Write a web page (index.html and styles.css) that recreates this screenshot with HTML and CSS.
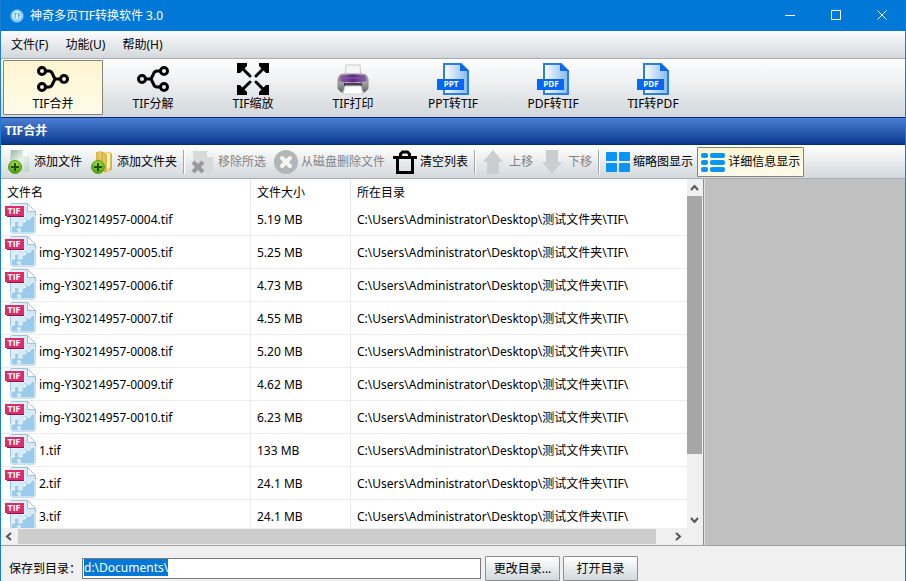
FILE: index.html
```html
<!DOCTYPE html>
<html lang="zh-CN">
<head>
  <meta charset="UTF-8">
  <meta name="viewport" content="width=device-width, initial-scale=1.0">
  <title>神奇多页TIF转换软件 3.0</title>
  <link rel="stylesheet" href="styles.css">
</head>
<body>

  <!-- Shared icons -->
  <svg class="defs" width="0" height="0">
    <defs>
      <linearGradient id="pageBlue" x1="0" y1="0" x2="1" y2="1">
        <stop offset="0" stop-color="#e6f2fa"/>
        <stop offset="1" stop-color="#c3e0f2"/>
      </linearGradient>
      <linearGradient id="docFill" x1="0" y1="0" x2="1" y2="0">
        <stop offset="0" stop-color="#ffffff"/>
        <stop offset="1" stop-color="#86b8f0"/>
      </linearGradient>
      <linearGradient id="pageGreen" x1="0" y1="0" x2="1" y2="1">
        <stop offset="0" stop-color="#8fb39b"/>
        <stop offset="0.5" stop-color="#eaf2ec"/>
        <stop offset="1" stop-color="#bcd0c2"/>
      </linearGradient>
      <radialGradient id="green" cx="0.5" cy="0.3" r="0.7">
        <stop offset="0" stop-color="#b5e24a"/>
        <stop offset="1" stop-color="#3f9a0c"/>
      </radialGradient>
      <linearGradient id="gold" x1="0" y1="0" x2="1" y2="0">
        <stop offset="0" stop-color="#d9b545"/>
        <stop offset="0.6" stop-color="#f7e08c"/>
        <stop offset="1" stop-color="#d6ac3a"/>
      </linearGradient>
      <linearGradient id="metal" x1="0" y1="0" x2="0" y2="1">
        <stop offset="0" stop-color="#dcdcdc"/>
        <stop offset="1" stop-color="#66666a"/>
      </linearGradient>
      <linearGradient id="purple" x1="0" y1="0" x2="1" y2="0">
        <stop offset="0" stop-color="#8d6aa5"/>
        <stop offset="0.5" stop-color="#5d2882"/>
        <stop offset="1" stop-color="#8d6aa5"/>
      </linearGradient>
      <symbol id="tif" viewBox="0 0 32 32">
        <path d="M6.500 .5h16l8 8v20a2 2 0 0 1-2 2h-21a2 2 0 0 1-2-2v-26a2 2 0 0 1 1-2z" fill="url(#pageBlue)" stroke="#9fc3d8"/>
        <path d="M6 23h3.500c1-1-1.500-3 .5-4.500 3-1.500 5 1 3.500 3-.5 1 0 1.500 1 1.500h2.500v-3c0-2 3 0 4-2 .5-2-3-2-2.500-4h3c0 2 1.500 3 3.500 2 1-1 1-2 1-3h4v17H6z" fill="#9acbea" stroke="#f6fbfe"/>
        <path d="M14 30c0-2-3-2-2-4s5-1 4 1 0 3 2 3" fill="#d9edf8"/>
        <path d="M22.500 .5v8h8z" fill="#fff" stroke="#9fc3d8"/>
        <path d="M0 4h19v10H2z" fill="#8c1545"/>
        <path d="M0 3h19v10H0z" fill="#dc2d6b"/>
        <text x="9" y="11" text-anchor="middle" class="tag big">TIF</text>
      </symbol>
      <symbol id="doc" viewBox="0 0 32 32">
        <path d="M7 1h17l7 7v23H7z" fill="url(#docFill)" stroke="#2a7fe6" stroke-width="2"/>
        <path d="M23 0v8h9z" fill="#0a68f0"/>
        <path d="M0 16h27v11H0z" fill="#0567f5"/>
      </symbol>
    </defs>
  </svg>

  <!-- Title bar -->
  <header class="titlebar">
    <svg class="logo" width="14" height="14" viewBox="0 0 14 14">
      <circle cx="7" cy="7" r="6.500" fill="#9ad0fa" stroke="#3e9cec"/>
      <circle cx="7" cy="6" r="4" fill="#d8eefe"/>
      <path d="M4 4.500h3M5.500 5v4M8.500 4v5M8.500 4.500h2M8.500 6.500h2" stroke="#59aef2" fill="none"/>
    </svg>
    <h1>神奇多页TIF转换软件 3.0</h1>
    <div class="window-buttons">
      <button aria-label="最小化"><svg width="11" height="11"><path d="M0 5.500h10" stroke="#fff"/></svg></button>
      <button aria-label="最大化"><svg width="11" height="11"><path d="M.5 .5h9v9h-9z" fill="none" stroke="#fff"/></svg></button>
      <button aria-label="关闭"><svg width="11" height="11"><path d="M.5 .5l9 9M9.500 .5l-9 9" stroke="#fff"/></svg></button>
    </div>
  </header>

  <!-- Menu -->
  <nav class="menu">
    <a href="#">文件(F)</a>
    <a href="#">功能(U)</a>
    <a href="#">帮助(H)</a>
  </nav>

  <!-- Main toolbar -->
  <div class="toolbar">
    <button class="tool active">
      <svg width="32" height="32" viewBox="0 0 32 32" fill="none" stroke="#000" stroke-width="3">
        <circle cx="5" cy="8" r="3.500"/><circle cx="5" cy="24" r="3.500"/><circle cx="27" cy="16" r="3.500"/>
        <path d="M9 8h3c3 0 3 2 4 4l2 4-2 4c-1 2-1 4-4 4H9M17 16h6"/>
      </svg>
      TIF合并
    </button>
    <button class="tool">
      <svg width="32" height="32" viewBox="0 0 32 32" fill="none" stroke="#000" stroke-width="3">
        <circle cx="27" cy="8" r="3.500"/><circle cx="27" cy="24" r="3.500"/><circle cx="5" cy="16" r="3.500"/>
        <path d="M23 8h-3c-3 0-3 2-4 4l-2 4 2 4c1 2 1 4 4 4h3M15 16H9"/>
      </svg>
      TIF分解
    </button>
    <button class="tool">
      <svg width="32" height="32" viewBox="0 0 32 32">
        <path d="M4 4l9 9M28 4l-9 9M4 28l9-9M28 28l-9-9" stroke="#000" stroke-width="3" stroke-linecap="round"/>
        <path d="M0 0h10v3L3 10H0zM32 0H22v3l7 7h3zM0 32h10v-3l-7-7H0zM32 32H22v-3l7-7h3z"/>
      </svg>
      TIF缩放
    </button>
    <button class="tool">
      <svg width="32" height="32" viewBox="0 0 32 32">
        <path d="M9 2h14l1 14H8z" fill="#f5f5f5" stroke="#c9c9c9"/>
        <path d="M3 12l4-1h18l4 1 2 4v10l-3 3h-4V17H8v12H4l-3-3V16z" fill="url(#metal)" stroke="#8b8b8f"/>
        <path d="M3 13c4-2 22-2 26 0l1 5c-5 2-23 2-28 0z" fill="url(#purple)"/>
        <path d="M8 15h16" stroke="#8f5fb0"/>
        <path d="M7 20h18v4H7z" fill="#44424c"/>
        <path d="M8 23h16l2 8H6z" fill="#fff" stroke="#cfcfcf"/>
      </svg>
      TIF打印
    </button>
    <button class="tool">
      <svg width="32" height="32" viewBox="0 0 32 32"><use href="#doc"/><text x="14" y="24" text-anchor="middle" class="tag">PPT</text></svg>
      PPT转TIF
    </button>
    <button class="tool">
      <svg width="32" height="32" viewBox="0 0 32 32"><use href="#doc"/><text x="14" y="24" text-anchor="middle" class="tag">PDF</text></svg>
      PDF转TIF
    </button>
    <button class="tool">
      <svg width="32" height="32" viewBox="0 0 32 32"><use href="#doc"/><text x="14" y="24" text-anchor="middle" class="tag">PDF</text></svg>
      TIF转PDF
    </button>
  </div>

  <h2 class="banner">TIF合并</h2>

  <!-- File actions -->
  <div class="actions">
    <button class="action">
      <svg width="24" height="24" viewBox="0 0 24 24">
        <path d="M4 0h12l6 6v16H2z" fill="url(#pageGreen)"/>
        <path d="M16 0v6h6z" fill="#fff"/>
        <circle cx="8" cy="17" r="6.500" fill="url(#green)" stroke="#58a31d"/>
        <path d="M8 13v8M4 17h8" stroke="#214d08" stroke-width="2"/>
      </svg>
      添加文件
    </button>
    <button class="action">
      <svg width="24" height="24" viewBox="0 0 24 24">
        <path d="M6 2l6-1 1 1h7l2 2v16l-9 3-7-2z" fill="url(#gold)"/>
        <path d="M17 3h3v14l-3 3z" fill="#fff4c4"/>
        <path d="M12 2l4 3v17l-4-2z" fill="#e5c45a" stroke="#c99f35"/>
        <circle cx="8" cy="17" r="6.500" fill="url(#green)" stroke="#58a31d"/>
        <path d="M8 13v8M4 17h8" stroke="#214d08" stroke-width="2"/>
      </svg>
      添加文件夹
    </button>
    <span class="separator"></span>
    <button class="action" disabled>
      <svg width="24" height="24" viewBox="0 0 24 24">
        <path d="M2 1h14l6 6v16H2z" fill="#d6dadb"/>
        <path d="M16 1v6h6z" fill="#f6f6f6"/>
        <path d="M2 12l10 10M12 12L2 22" stroke="#999" stroke-width="4"/>
      </svg>
      移除所选
    </button>
    <button class="action" disabled>
      <svg width="24" height="24" viewBox="0 0 24 24">
        <circle cx="12" cy="12" r="12" fill="#b3b6b7"/>
        <path d="M8 8l8 8M16 8l-8 8" stroke="#f5f5f5" stroke-width="4" stroke-linecap="round"/>
      </svg>
      从磁盘删除文件
    </button>
    <button class="action">
      <svg width="24" height="24" viewBox="0 0 24 24" fill="none" stroke="#000" stroke-width="3">
        <path d="M0 7.500h24M7.500 7V4l2-2h5l2 2v3M4.500 8v14.500h15V8"/>
      </svg>
      清空列表
    </button>
    <span class="separator"></span>
    <button class="action" disabled>
      <svg width="24" height="24" viewBox="0 0 24 24">
        <path d="M11 0l10 12h-4v12H5V12H1z" fill="#cbced0"/>
      </svg>
      上移
    </button>
    <button class="action" disabled>
      <svg width="24" height="24" viewBox="0 0 24 24">
        <path d="M5 0h12v12h4L11 24 1 12h4z" fill="#cbced0"/>
      </svg>
      下移
    </button>
    <span class="separator"></span>
    <button class="action">
      <svg width="24" height="24" viewBox="0 0 24 24" fill="#0a94f8">
        <rect x="0" y="2" width="11" height="9" rx="1"/><rect x="13" y="2" width="11" height="9" rx="1"/>
        <rect x="0" y="13" width="11" height="9" rx="1"/><rect x="13" y="13" width="11" height="9" rx="1"/>
      </svg>
      缩略图显示
    </button>
    <button class="action active">
      <svg width="24" height="24" viewBox="0 0 24 24" fill="#0a94f8">
        <rect x="0" y="3" width="7" height="5" rx="2"/><rect x="9" y="3" width="15" height="5" rx="2"/>
        <rect x="0" y="10" width="7" height="5" rx="2"/><rect x="9" y="10" width="15" height="5" rx="2"/>
        <rect x="0" y="17" width="7" height="5" rx="2"/><rect x="9" y="17" width="15" height="5" rx="2"/>
      </svg>
      详细信息显示
    </button>
  </div>

  <!-- File list and preview -->
  <main class="content">
    <div class="list">
      <div class="table-box">
        <table>
          <thead>
            <tr><th class="col-name">文件名</th><th class="col-size">文件大小</th><th>所在目录</th></tr>
          </thead>
          <tbody id="files"></tbody>
        </table>
      </div>
      <div class="vscroll">
        <svg width="15" height="17"><path d="M4 11l3.500-4L11 11" class="chevron"/></svg>
        <div class="track"><div class="thumb"></div></div>
        <svg width="15" height="17"><path d="M4 7l3.500 4L11 7" class="chevron"/></svg>
      </div>
      <div class="hscroll">
        <svg width="17" height="17"><path d="M10 5L6 8.500l4 3.500" class="chevron"/></svg>
        <div class="track"><div class="thumb"></div></div>
        <svg width="17" height="17"><path d="M7 5l4 3.500L7 12" class="chevron"/></svg>
      </div>
    </div>
    <aside class="preview"></aside>
  </main>

  <!-- Output folder -->
  <footer class="output">
    <label for="folder">保存到目录：</label>
    <input type="text" id="folder" value="d:\Documents\">
    <button>更改目录...</button>
    <button>打开目录</button>
  </footer>

  <script>
    const files = [
      ['img-Y30214957-0004.tif', '5.19 MB'],
      ['img-Y30214957-0005.tif', '5.25 MB'],
      ['img-Y30214957-0006.tif', '4.73 MB'],
      ['img-Y30214957-0007.tif', '4.55 MB'],
      ['img-Y30214957-0008.tif', '5.20 MB'],
      ['img-Y30214957-0009.tif', '4.62 MB'],
      ['img-Y30214957-0010.tif', '6.23 MB'],
      ['1.tif', '133 MB'],
      ['2.tif', '24.1 MB'],
      ['3.tif', '24.1 MB']
    ];
    const folder = 'C:\\Users\\Administrator\\Desktop\\测试文件夹\\TIF\\';

    // Fill the file table
    document.getElementById('files').innerHTML = files.map(file => `
      <tr>
        <td><div class="file"><svg width="32" height="32"><use href="#tif"/></svg><span>${file[0]}</span></div></td>
        <td>${file[1]}</td>
        <td>${folder}</td>
      </tr>`).join('');

    // Start with the output folder selected
    const input = document.getElementById('folder');
    input.focus();
    input.select();
  </script>

</body>
</html>
```
FILE: styles.css
```css
* {
  box-sizing: border-box;
}

body {
  display: flex;
  flex-direction: column;
  height: 100vh;
  margin: 0;
  overflow: hidden;
  border: solid #1c7cd0;
  border-width: 0 1px;
  background-color: #f0f0f0;
  color: #000;
  font-family: "Noto Sans", "Noto Sans CJK SC", sans-serif;
  font-size: 12px;
  line-height: 16px;
}

button, input {
  font: inherit;
  color: inherit;
}

button {
  padding: 0;
  border: 1px solid transparent;
  background: none;
  white-space: nowrap;
}

svg {
  display: block;
  flex: none;
}

.defs {
  position: absolute;
}

.tag {
  fill: #fff;
  font-family: "Open Sans", sans-serif;
  font-size: 8px;
  font-weight: bold;
}

.tag.big {
  font-size: 9px;
}

/* Title bar */
.titlebar {
  display: flex;
  flex: none;
  align-items: center;
  height: 31px;
  margin: 0 -1px;
  padding: 0 1px 0 10px;
  background-color: #0078d7;
  color: #fff;
}

.titlebar h1 {
  flex: 1;
  margin: 0 0 0 6px;
  font-size: 12px;
  font-weight: normal;
}

.window-buttons {
  display: flex;
}

.window-buttons button {
  display: flex;
  align-items: center;
  justify-content: center;
  width: 46px;
  height: 30px;
}

/* Menu */
.menu {
  display: flex;
  flex: none;
  gap: 17px;
  height: 28px;
  padding: 6px 10px 5px;
  border-bottom: 1px solid #a9adb2;
  background: linear-gradient(#fcfcfc, #d3d8dc);
}

.menu a {
  color: #000;
  text-decoration: none;
}

/* Main toolbar */
.toolbar {
  display: flex;
  flex: none;
  padding: 1px 2px 2px;
  background: linear-gradient(#fff, #d3d8dc);
}

.tool {
  display: flex;
  flex-direction: column;
  align-items: center;
  gap: 1px;
  width: 100px;
  height: 55px;
  padding-top: 2px;
}

.active {
  border: 1px solid #85837a;
  border-radius: 1px;
  background: linear-gradient(#fef5d0, #fffbea);
}

.banner {
  flex: none;
  height: 28px;
  margin: 0;
  padding: 5px 4px;
  border: solid #002d7d;
  border-width: 1px 0;
  background: linear-gradient(#4c7fd3, #093a90);
  color: #fff;
  font-size: 12px;
}

/* File actions */
.actions {
  display: flex;
  flex: none;
  align-items: center;
  height: 34px;
  padding: 0 2px;
  border-bottom: 1px solid #a9adb2;
  background: linear-gradient(#fff, #d3d8dc);
}

.action {
  display: flex;
  align-items: center;
  gap: 3px;
  height: 30px;
  padding: 0 3px;
}

.action:disabled {
  color: #838383;
}

.separator {
  width: 2px;
  height: 24px;
  margin: 0 2px;
  border-left: 1px solid #a5a8ab;
  border-right: 1px solid #fff;
}

/* File list */
.content {
  display: flex;
  flex: 1;
  min-height: 0;
  border-bottom: 1px solid #a0a0a0;
}

.list {
  display: grid;
  flex: 1;
  grid-template-columns: 1fr 15px;
  grid-template-rows: 1fr 17px;
  min-width: 0;
  padding-right: 1px;
  border-right: 1px solid #8f8f8f;
}

.table-box {
  overflow: hidden;
  background-color: #fff;
}

table {
  width: 100%;
  table-layout: fixed;
  border-collapse: separate;
  border-spacing: 0;
}

th {
  height: 24px;
  padding: 3px 6px 0;
  border-right: 1px solid #e5e5e5;
  font-weight: normal;
  text-align: left;
}

th:last-child, td:last-child {
  border-right: 0;
}

.col-name {
  width: 250px;
}

.col-size {
  width: 100px;
}

td {
  height: 33px;
  padding: 2px 6px 0;
  border-right: 1px solid #ececec;
  border-bottom: 1px solid #ececec;
  white-space: nowrap;
}

td:first-child {
  padding: 0 0 0 4px;
}

.file {
  display: flex;
  align-items: center;
  gap: 2px;
}

.file span {
  padding-top: 2px;
}

.preview {
  width: 201px;
  border-left: 1px solid #e3e3e3;
  background-color: #c0c0c0;
}

/* Scroll bars */
.vscroll, .hscroll {
  display: flex;
  background-color: #f0f0f0;
}

.vscroll {
  flex-direction: column;
}

.hscroll {
  grid-column: 1 / 3;
  padding-right: 16px;
}

.track {
  flex: 1;
}

.vscroll .thumb {
  height: 82%;
  background-color: #a6a6a6;
}

.hscroll .track {
  padding: 1px 0;
}

.hscroll .thumb {
  width: 98%;
  height: 15px;
  background-color: #cdcdcd;
}

.chevron {
  fill: none;
  stroke: #555;
  stroke-width: 2;
}

/* Output folder */
.output {
  display: flex;
  flex: none;
  align-items: center;
  height: 35px;
  padding: 10px 8px 0;
}

.output input {
  flex: 0 1 399px;
  min-width: 0;
  height: 21px;
  margin: 0 4px 0 1px;
  padding: 0 1px 2px;
  border: 1px solid #7a7a7a;
  outline: 0;
  background-color: #fff;
}

.output input::selection {
  background-color: #0078d7;
  color: #fff;
}

.output button {
  width: 75px;
  height: 25px;
  margin-right: 3px;
  border: 1px solid #8d9093;
  border-radius: 1px;
  background: linear-gradient(#fff, #d3d8dc);
}
```
